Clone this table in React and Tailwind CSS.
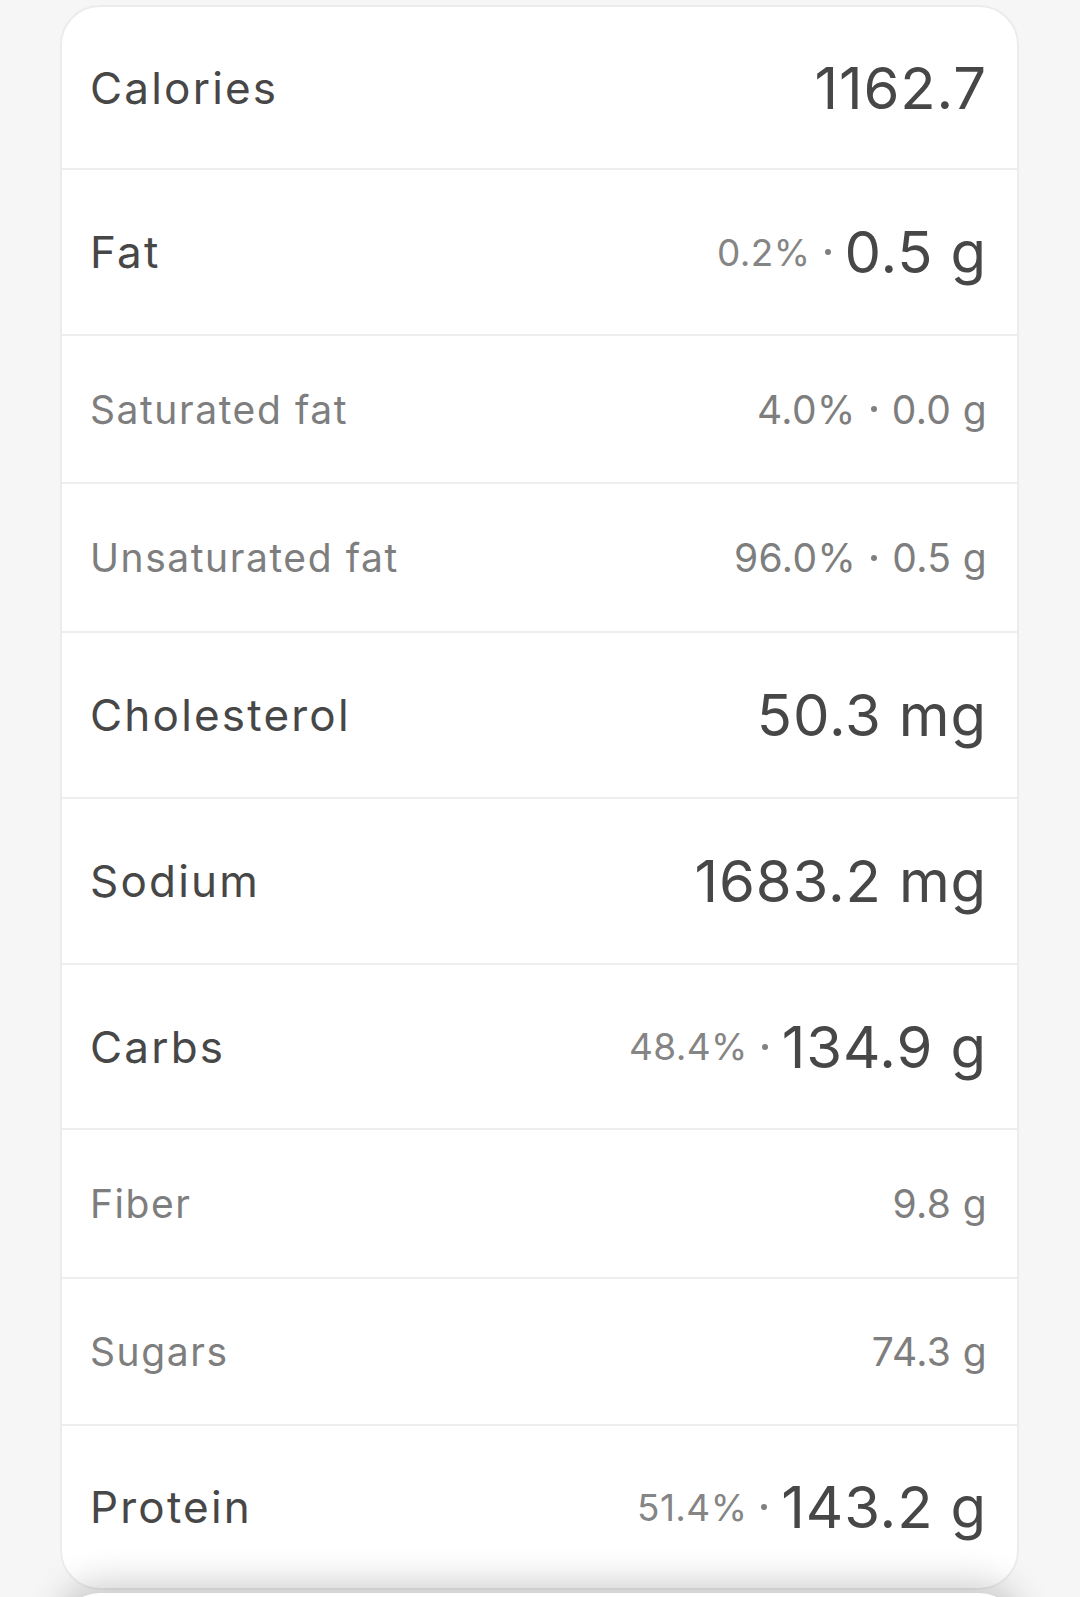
import React from "react";

const rows = [
  { label: "Calories", value: "1162.7", big: true, height: "h-[163px]" },
  { label: "Fat", pct: "0.2%", value: "0.5 g", big: true, height: "h-[166px]" },
  { label: "Saturated fat", pct: "4.0%", value: "0.0 g", big: false, height: "h-[148px]" },
  { label: "Unsaturated fat", pct: "96.0%", value: "0.5 g", big: false, height: "h-[149px]" },
  { label: "Cholesterol", value: "50.3 mg", big: true, height: "h-[166px]" },
  { label: "Sodium", value: "1683.2 mg", big: true, height: "h-[166px]" },
  { label: "Carbs", pct: "48.4%", value: "134.9 g", big: true, height: "h-[165px]" },
  { label: "Fiber", value: "9.8 g", big: false, height: "h-[149px]" },
  { label: "Sugars", value: "74.3 g", big: false, height: "h-[147px]" },
  { label: "Protein", pct: "51.4%", value: "143.2 g", big: true, height: "h-[162px]" },
];

const Dot = ({ big }) => (
  <span
    className={
      big
        ? "mx-[14px] inline-block h-[6px] w-[6px] rounded-full bg-[#808080]"
        : "mx-[15px] inline-block h-[6px] w-[6px] rounded-full bg-[#808080]"
    }
  ></span>
);

const NutritionRow = ({ row, last }) => {
  return (
    <div
      className={`flex items-center justify-between pl-[28px] pr-[30px] ${row.height} ${
        last ? "" : "border-b-2 border-[#eeeeee]"
      }`}
    >
      {row.big ? (
        <span className="text-[44px] leading-none tracking-[0.05em] text-[#474747]">
          {row.label}
        </span>
      ) : (
        <span className="text-[39px] leading-none tracking-[0.04em] text-[#7e7e7e]">
          {row.label}
        </span>
      )}

      {row.big ? (
        <div className="flex items-center">
          {row.pct && (
            <>
              <span className="text-[37px] leading-none tracking-[0.01em] text-[#858585]">
                {row.pct}
              </span>
              <Dot big />
            </>
          )}
          <span className="text-[58px] leading-none tracking-[0.015em] text-[#474747]">
            {row.value}
          </span>
        </div>
      ) : (
        <div className="flex items-center text-[39px] leading-none tracking-[0.01em] text-[#7e7e7e]">
          {row.pct && (
            <>
              <span>{row.pct}</span>
              <Dot />
            </>
          )}
          <span>{row.value}</span>
        </div>
      )}
    </div>
  );
};

const App = () => {
  return (
    <div
      className="h-[1597px] overflow-hidden bg-[#f6f6f6] pt-[5px]"
      style={{ fontFamily: "Inter, 'Noto Sans', sans-serif" }}
    >
      <div className="ml-[60px] w-[959px] rounded-[40px] border-2 border-[#ececec] bg-white">
        {rows.map((row, i) => (
          <NutritionRow key={row.label} row={row} last={i === rows.length - 1} />
        ))}
      </div>

      {/* next card peeking in at the bottom */}
      <div className="ml-[60px] mt-[3px] h-[60px] w-[959px] rounded-t-[40px] bg-white shadow-[0_-10px_36px_rgba(0,0,0,0.2)]"></div>
    </div>
  );
};

export default App;
